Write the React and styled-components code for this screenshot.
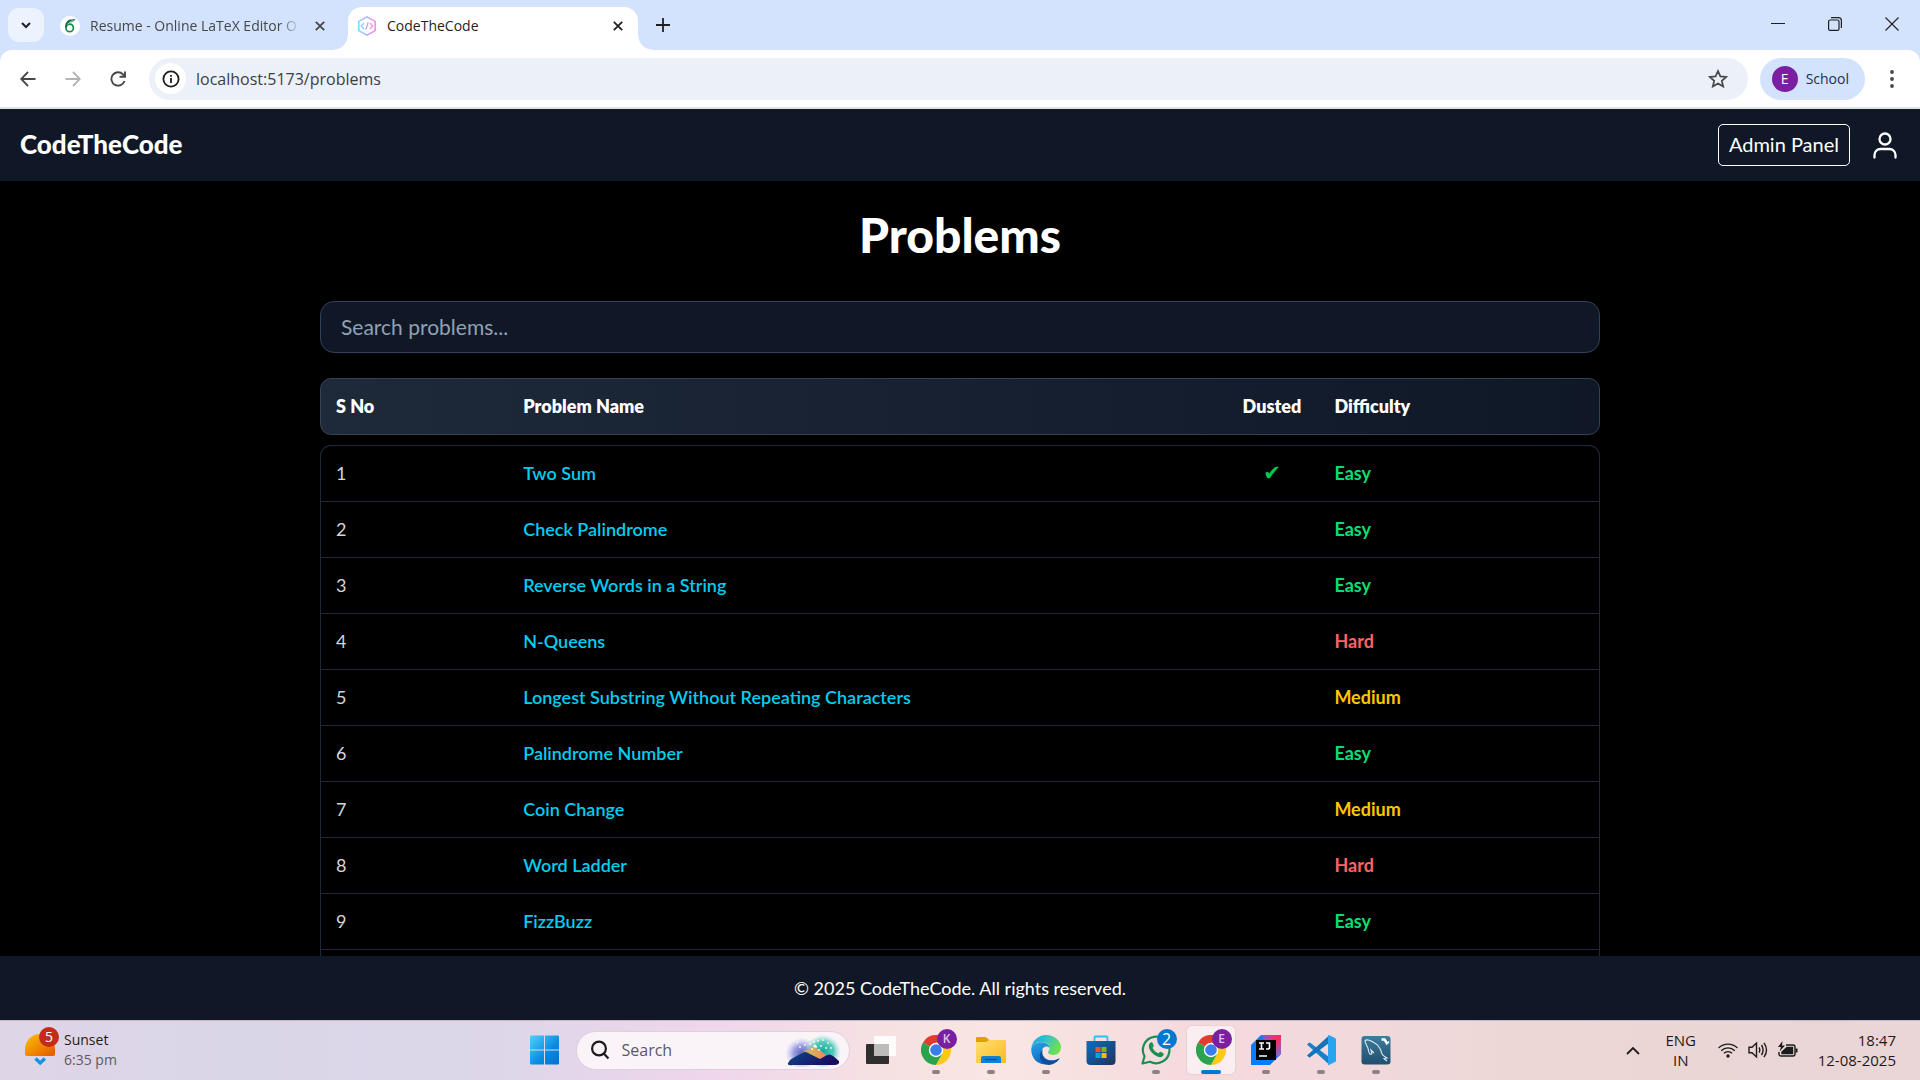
import React from "react";
import styled, { createGlobalStyle, css } from "styled-components";

const uiFont = '"Open Sans", "Noto Sans", sans-serif';
const siteFont = 'Lato, "Open Sans", sans-serif';

const GlobalStyle = createGlobalStyle`
  *, *::before, *::after { box-sizing: border-box; }
  body { margin: 0; background: #000; }
  button, input { font: inherit; color: inherit; }
  button { border: 0; padding: 0; background: none; cursor: pointer; }
  a { text-decoration: none; color: inherit; }
  svg { display: block; flex: none; }
`;

const Screen = styled.div`
  display: flex;
  flex-direction: column;
  height: 100vh;
  overflow: hidden;
  font-family: ${uiFont};
`;

/* ---------- browser window ---------- */

const TabStrip = styled.div`
  display: flex;
  align-items: flex-start;
  height: 50px;
  padding-left: 8px;
  background: #d3e2fd;
  color: #1f1f1f;
`;

const TabSearch = styled.button`
  display: grid;
  place-items: center;
  width: 36px;
  height: 34px;
  margin: 8px 8px 0 0;
  border-radius: 11px;
  background: #ecf2fe;
`;

const Tab = styled.div`
  position: relative;
  display: flex;
  align-items: center;
  gap: 10px;
  width: ${(p) => (p.$active ? 290 : 296)}px;
  height: 43px;
  margin-top: 7px;
  padding: 0 ${(p) => (p.$active ? 10 : 18)}px 6px ${(p) => (p.$active ? 9 : 8)}px;
  font-size: 14px;
  color: #474747;
  ${(p) =>
    p.$active &&
    css`
      background: #fff;
      color: #1f1f1f;
      border-radius: 14px 14px 0 0;
      &::before,
      &::after {
        content: "";
        position: absolute;
        bottom: 0;
        width: 14px;
        height: 14px;
      }
      &::before {
        left: -14px;
        background: radial-gradient(circle at 0 0, transparent 13px, #fff 14px);
      }
      &::after {
        right: -14px;
        background: radial-gradient(circle at 100% 0, transparent 13px, #fff 14px);
      }
    `}
`;

const TabTitle = styled.span`
  flex: 1;
  overflow: hidden;
  white-space: nowrap;
  line-height: 20px;
  ${(p) => p.$fade && css`mask-image: linear-gradient(90deg, #000 90%, transparent);`}
`;

const IconButton = styled.button`
  display: grid;
  place-items: center;
  width: ${(p) => p.$w || 20}px;
  height: ${(p) => p.$h || 20}px;
  color: ${(p) => p.$color || "inherit"};
`;

const NewTab = styled(IconButton)`
  margin: 8px 0 0 8px;
`;

const WindowControls = styled.div`
  display: flex;
  margin-left: auto;
`;

const ToolbarBack = styled.div`
  background: #d3e2fd;
`;

const Toolbar = styled.div`
  display: flex;
  align-items: center;
  gap: 9px;
  height: 59px;
  padding: 0 10px;
  background: #fff;
  border-bottom: 2px solid #dfe4e2;
  border-radius: 12px 12px 0 0;
  color: #474747;
`;

const Omnibox = styled.label`
  display: flex;
  flex: 1;
  align-items: center;
  height: 42px;
  margin: 0 3px 0 4px;
  padding: 0 20px 0 6px;
  border-radius: 21px;
  background: #ebf0f9;
`;

const SiteInfo = styled.span`
  display: grid;
  place-items: center;
  width: 31px;
  height: 31px;
  margin-right: 10px;
  border-radius: 50%;
  background: #fff;
`;

const UrlInput = styled.input`
  flex: 1;
  min-width: 0;
  padding: 0;
  border: 0;
  outline: 0;
  background: none;
  font-size: 16px;
  line-height: 24px;
  color: #3c3e42;
`;

const Profile = styled.button`
  display: flex;
  align-items: center;
  gap: 8px;
  height: 42px;
  padding: 0 16px 0 12px;
  border-radius: 21px;
  background: #d3e2fd;
  font-size: 14px;
  color: #1b2f52;
`;

const Avatar = styled.span`
  display: grid;
  place-items: center;
  width: 26px;
  height: 26px;
  border-radius: 50%;
  background: #7b1fa2;
  color: #fff;
  font-size: 14px;
`;

/* ---------- site ---------- */

const SiteHeader = styled.header`
  display: flex;
  align-items: center;
  gap: 20px;
  height: 72px;
  flex: none;
  padding: 0 20px;
  background: #101828;
  color: #fff;
  font-family: ${siteFont};
`;

const Brand = styled.a`
  margin-right: auto;
  padding-bottom: 2px;
  font-size: 26px;
  font-weight: 900;
`;

const AdminLink = styled.a`
  padding: 7px 10px 9px;
  border: 1px solid #fff;
  border-radius: 5px;
  font-size: 20px;
  line-height: 24px;
`;

const Main = styled.main`
  flex: 1;
  display: flex;
  flex-direction: column;
  min-height: 0;
  overflow: hidden;
  width: 100%;
  max-width: 1280px;
  margin: 0 auto;
  background: #000;
  font-family: ${siteFont};
`;

const Title = styled.h1`
  margin: 26px 0 38px;
  text-align: center;
  font-size: 48px;
  line-height: 56px;
  font-weight: 900;
  color: #fff;
`;

const ProblemSearch = styled.input`
  height: 52px;
  flex: none;
  padding: 0 20px 2px;
  border: 1px solid #314158;
  border-radius: 14px;
  background: #101828;
  outline: 0;
  font-size: 21px;
  color: #fff;
  &::placeholder { color: #90a1b0; opacity: 1; }
`;

const ProblemTable = styled.table`
  display: flex;
  flex-direction: column;
  flex: 1;
  min-height: 0;
  margin-top: 25px;
  font-size: 18px;
  line-height: 24px;
  color: #d1d5dc;
`;

const TableHead = styled.thead`
  display: block;
  margin-bottom: 10px;
  border: 1px solid #364153;
  border-radius: 11px;
  background: linear-gradient(90deg, #1e2939, #101828);
  color: #fff;
`;

const TableBody = styled.tbody`
  display: block;
  flex: 1;
  border: solid #1e2939;
  border-width: 1px 1px 0;
  border-radius: 11px 11px 0 0;
`;

const Row = styled.tr`
  display: grid;
  grid-template-columns: 15fr 55fr 10fr 20fr;
  align-items: center;
  height: ${(p) => (p.$head ? 55 : 56)}px;
  padding: 0 15px 1px;
  ${(p) => !p.$head && css`border-bottom: 1px solid #1e2939;`}
`;

const HeadCell = styled.th`
  padding: 0;
  text-align: ${(p) => (p.$center ? "center" : "left")};
  font-weight: 800;
`;

const Cell = styled.td`
  padding: 0;
  text-align: ${(p) => (p.$center ? "center" : "left")};
`;

const ProblemLink = styled.a`
  font-weight: 600;
  color: #00cdf0;
`;

const levelColor = { Easy: "#05df72", Medium: "#fdc700", Hard: "#ff6467" };

const Level = styled.span`
  font-weight: 700;
  color: ${(p) => levelColor[p.$level]};
`;

const Done = styled.span`
  display: block;
  color: #00c950;
  font-family: "DejaVu Sans", sans-serif;
  font-size: 21px;
  font-weight: 700;
`;

const SiteFooter = styled.footer`
  display: grid;
  place-items: center;
  height: 64px;
  flex: none;
  background: #101828;
  color: #fff;
  font-family: ${siteFont};
  font-size: 18px;
`;

/* ---------- taskbar ---------- */

const Taskbar = styled.footer`
  display: grid;
  grid-template-columns: 1fr auto 1fr;
  align-items: center;
  height: 60px;
  flex: none;
  padding-bottom: 1px;
  border-top: 1px solid #c9b6c0;
  background: linear-gradient(90deg, #dfd5e7 0%, #d9d6e8 12%, #ddd6e9 26%, #efd6ec 37%, #f6e1e2 46%, #f9e6e2 52%, #f5dade 62%, #f2d9dc 70%, #ecd7d5 80%, #ead5d7 100%);
  color: #1c1c1c;
`;

const Weather = styled.button`
  display: flex;
  align-items: center;
  gap: 9px;
  padding-left: 25px;
  text-align: left;
  font-size: 14px;
  line-height: 20px;
`;

const Muted = styled.span`
  display: block;
  color: #5d5863;
`;

const Apps = styled.nav`
  display: flex;
  align-items: center;
  gap: 7px;
`;

const AppButton = styled.button`
  position: relative;
  display: grid;
  place-items: center;
  width: 48px;
  height: 48px;
  border-radius: 5px;
  background: ${(p) => (p.$active ? "#faeef0" : "none")};
  box-shadow: ${(p) => (p.$active ? "0 0 1px 1px #e8d2d6" : "none")};
  ${(p) =>
    (p.$running || p.$active) &&
    css`
      &::after {
        content: "";
        position: absolute;
        bottom: 0;
        left: 50%;
        width: ${p.$active ? 20 : 8}px;
        height: 4px;
        border-radius: 2px;
        background: ${p.$active ? "#0078d4" : "#8d8184"};
        transform: translateX(-50%);
      }
    `}
`;

const Badge = styled.span`
  position: absolute;
  top: 3px;
  right: 3px;
  display: grid;
  place-items: center;
  width: 20px;
  height: 20px;
  border-radius: 50%;
  background: ${(p) => p.$color};
  color: ${(p) => p.$text || "#fff"};
  font-size: ${(p) => p.$size || 12}px;
  font-weight: ${(p) => (p.$text ? 600 : 400)};
  line-height: 20px;
`;

const IconHolder = styled.span`
  position: relative;
  display: block;
`;

const WeatherBadge = styled(Badge)`
  top: -7px;
  right: -4px;
`;

const TaskSearch = styled.label`
  display: flex;
  align-items: center;
  gap: 12px;
  width: 274px;
  height: 39px;
  padding: 0 8px 0 13px;
  border: 1px solid #e0cfdd;
  border-radius: 20px;
  background: #faf4f9;
`;

const TaskSearchInput = styled.input`
  flex: 1;
  min-width: 0;
  padding: 0;
  border: 0;
  outline: 0;
  background: none;
  font-size: 16px;
  &::placeholder { color: #5c5960; opacity: 1; }
`;

const Tray = styled.div`
  display: flex;
  justify-content: flex-end;
  align-items: center;
  padding-right: 24px;
  font-size: 15px;
  line-height: 20px;
`;

const Language = styled.button`
  width: 40px;
  margin: 0 17px 0 18px;
  text-align: center;
`;

const Status = styled.div`
  display: flex;
  align-items: center;
  gap: 10px;
`;

const Clock = styled.time`
  margin-left: 20px;
  text-align: right;
  white-space: pre-line;
`;

/* ---------- drawings ---------- */

const Stroke = ({ w = 20, h, box, sw = 2, children, ...rest }) => (
  <svg width={w} height={h || w} viewBox={box || `0 0 ${w} ${h || w}`} fill="none" stroke="currentColor" strokeWidth={sw} {...rest}>
    {children}
  </svg>
);

const Cross = () => (
  <Stroke w={10} sw={1.8}><path d="M.8.8l8.4 8.4M9.2.8L.8 9.2" /></Stroke>
);

const Overleaf = () => (
  <svg width="20" height="20" viewBox="0 0 20 20">
    <circle cx="10" cy="10" r="10" fill="#fff" />
    <ellipse cx="9.7" cy="11.9" rx="3.7" ry="3.800" fill="none" stroke="#138a4b" strokeWidth="1.7" />
    <path d="M5.200 12C4.800 7.500 7.200 4 10.500 3.600c2-.3 3.500-.1 5-.6-1 2.300-3 2.800-4.500 3.300-2 .7-3.500 2-4 4.200z" fill="#0f6b3c" />
    <path d="M7.500 8.500C8.800 6.300 11 5.400 13.500 4.400" fill="none" stroke="#fff" strokeWidth=".7" />
  </svg>
);

const CodeLogo = () => (
  <svg width="20" height="20" viewBox="0 0 20 20" fill="none" strokeWidth="1.600">
    <defs>
      <linearGradient id="hex" x1="0" x2="1">
        <stop offset="0" stopColor="#7fdcff" />
        <stop offset=".5" stopColor="#b9a8ff" />
        <stop offset="1" stopColor="#ff8ce8" />
      </linearGradient>
    </defs>
    <path d="M10 .9l8.200 4.500v9.200L10 19.100 1.800 14.600V5.400z" stroke="url(#hex)" />
    <path d="M7 7l-2.800 3L7 13M13 7l2.800 3-2.800 3M11.200 6.200L8.800 13.800" stroke="url(#hex)" strokeWidth="1.300" />
  </svg>
);

const Chrome = () => (
  <svg width="30" height="30" viewBox="0 0 48 48">
    <path d="M24 24L3.200 12A24 24 0 0 1 44.800 12z" fill="#e33b2e" />
    <path d="M24 24L3.200 12A24 24 0 0 0 24 48L34.400 30z" fill="#2ba24c" />
    <path d="M24 12h20.800A24 24 0 0 1 24 48l10.400-18z" fill="#fdc816" />
    <circle cx="24" cy="24" r="11.500" fill="#fff" />
    <circle cx="24" cy="24" r="9.300" fill="#3b7ded" />
  </svg>
);

const Windows = () => (
  <svg width="30" height="30" viewBox="0 0 30 30">
    <defs>
      <linearGradient id="win" x1="0" y1="0" x2="1" y2="1" >
        <stop offset="0" stopColor="#4fd0ff" />
        <stop offset=".6" stopColor="#0a8ade" />
        <stop offset="1" stopColor="#0070d0" />
      </linearGradient>
    </defs>
    <path d="M0 1.500Q0 .5 1 .5h13v14H0zM15 .5h13q1 0 1 1v13H15zM0 15.500h14v14H1q-1 0-1-1zM15 15.500h14v13q0 1-1 1H15z" fill="url(#win)" />
  </svg>
);

const sparks = [[12, 9], [17, 5], [23, 7], [28, 4], [33, 8], [38, 7], [43, 10], [15, 14], [20, 12], [25, 11], [29, 9], [31, 14], [36, 13], [41, 15], [46, 15], [27, 16], [34, 17]];

const Fireworks = () => (
  <svg width="56" height="34" viewBox="0 0 56 34">
    <defs>
      <radialGradient id="glowA" cx=".5" cy=".55"><stop offset="0" stopColor="#5660b8" /><stop offset=".5" stopColor="#8a90dc" stopOpacity=".85" /><stop offset="1" stopColor="#b9bdf2" stopOpacity="0" /></radialGradient>
      <radialGradient id="glowB" cx=".5" cy=".55"><stop offset="0" stopColor="#12a79b" /><stop offset=".6" stopColor="#3dc3b4" stopOpacity=".85" /><stop offset="1" stopColor="#8fe0d8" stopOpacity="0" /></radialGradient>
      <linearGradient id="hill" x1="0" y1="0" x2="1" y2=".4"><stop offset="0" stopColor="#0a4a8a" /><stop offset="1" stopColor="#1b0a62" /></linearGradient>
      <linearGradient id="dusk" x1="0" x2="1"><stop offset="0" stopColor="#a99a78" /><stop offset=".5" stopColor="#d8b060" /><stop offset="1" stopColor="#f2805c" /></linearGradient>
    </defs>
    <ellipse cx="17" cy="19" rx="17" ry="16" fill="url(#glowA)" />
    <ellipse cx="38" cy="17" rx="18" ry="17" fill="url(#glowB)" />
    <path d="M12 23l9-6 8-3 7 4 6 5-7 5z" fill="url(#dusk)" />
    {sparks.map(([x, y]) => <circle key={`${x}-${y}`} cx={x} cy={y} r=".9" fill="#fff6d8" />)}
    <circle cx="30" cy="13" r="1.600" fill="#fffbe0" />
    <path d="M3 30q1-3 5-5l9-5q3-2 6 0l12 6 7-4q3-1.500 6 1l6 5q1 4-5 4H8q-6 1-5-2z" fill="url(#hill)" />
  </svg>
);

const TaskView = () => (
  <svg width="30" height="30" viewBox="0 0 30 30">
    <rect x="0" y="9" width="23" height="20" rx="1" fill="#2f2f2d" />
    <rect x="8" y="1" width="22" height="20" rx="1" fill="#fff" opacity=".85" />
    <rect x="8" y="9" width="15" height="12" fill="#bcbcba" />
  </svg>
);

const Folder = () => (
  <svg width="30" height="30" viewBox="0 0 30 30">
    <defs><linearGradient id="fold" x1="0" y1="0" x2="1" y2="1"><stop offset="0" stopColor="#ffe073" /><stop offset="1" stopColor="#fbb91c" /></linearGradient></defs>
    <path d="M0 3q0-1 1-1h8q1 0 2 1l2 2v4H0z" fill="#e0a008" />
    <path d="M0 7h10l3-2h16q1 0 1 1v21q0 1-1 1H1q-1 0-1-1z" fill="url(#fold)" />
    <path d="M5 28v-5q0-2 2-2h16q2 0 2 2v5z" fill="#1380d2" />
    <path d="M9 24.500h12" stroke="#0a5596" strokeWidth="1.400" />
  </svg>
);

const Edge = () => (
  <svg width="30" height="30" viewBox="0 0 30 30">
    <defs>
      <linearGradient id="edgeTop" x1="0" y1="0" x2="1" y2=".4"><stop offset="0" stopColor="#1b9de0" /><stop offset=".5" stopColor="#33c3c9" /><stop offset="1" stopColor="#6fe04e" /></linearGradient>
      <linearGradient id="edgeLow" x1="0" y1="0" x2=".4" y2="1"><stop offset="0" stopColor="#2aa5e8" /><stop offset="1" stopColor="#0968c3" /></linearGradient>
    </defs>
    <path d="M.3 13C1.500 5.500 7.500 0 15 0c8.500 0 15 5.800 15 12.500 0 4.500-3.300 7.500-7.500 7.500-3.500 0-5.500-1.400-5.500-2.700 0-1 1.500-1.400 1.500-4.300C18.500 9.500 15 7 10.500 7 5 7 1.500 10 .3 13z" fill="url(#edgeTop)" />
    <path d="M.2 14C1 9.500 5.500 7.200 10.200 7.200c4.800 0 8.300 2.600 8.300 5.800-2.500-3-8-1.500-8 5 0 6 5.500 10 10 10.400C12 32 0 27 .2 14z" fill="url(#edgeLow)" />
    <path d="M12 14.500c-2.500 5 2 11 9 10.800 3 0 5-1 7-1.800.5-.2.800.2.500.6C23 31.500 13 32 9.500 24.500 8 20.500 9 16.500 12 14.500z" fill="#0c4f9e" />
  </svg>
);

const Store = () => (
  <svg width="30" height="30" viewBox="0 0 30 30">
    <defs><linearGradient id="store" x1="0" y1="0" x2="1" y2="1"><stop offset="0" stopColor="#0a6fc0" /><stop offset="1" stopColor="#22325c" /></linearGradient></defs>
    <path d="M8.500 6V2.500q0-1 1-1h11q1 0 1 1V6" fill="none" stroke="#2cc0f2" strokeWidth="1.800" />
    <path d="M.5 6h29v20q0 4-4 4h-21q-4 0-4-4z" fill="url(#store)" />
    <path d="M9.500 12h5v5h-5z" fill="#f04e23" /><path d="M15.500 12h5v5h-5z" fill="#7fba00" />
    <path d="M9.500 18h5v5h-5z" fill="#00a4ef" /><path d="M15.500 18h5v5h-5z" fill="#ffb900" />
  </svg>
);

const WhatsApp = () => (
  <svg width="30" height="30" viewBox="0 0 30 30">
    <path d="M1.500 28.500l2-7.200A13.300 13.300 0 1 1 9 26.700z" fill="none" stroke="#1c8f55" strokeWidth="2.200" strokeLinejoin="round" />
    <path d="M9.500 7.500c.8-.6 1.700-.4 2 .3l1.200 2.800c.3.700-1 1.800-1 2.300 1.200 2.600 3 4.200 5.500 5.300.7.200 1.600-1.600 2.300-1.400l2.800 1.400c1 .6.200 2.600-1 3.400-2 1.200-5 .4-8-1.900-3.500-2.700-5.500-6-5.500-8.500 0-1.600.8-3 1.700-3.700z" fill="#1c8f55" />
  </svg>
);

const IntelliJ = () => (
  <svg width="30" height="30" viewBox="0 0 30 30">
    <defs>
      <linearGradient id="ij" x1=".2" y1="0" x2="1" y2=".7"><stop offset="0" stopColor="#7a5be0" /><stop offset=".3" stopColor="#e0358a" /><stop offset=".55" stopColor="#fe2857" /><stop offset="1" stopColor="#8b62c8" /></linearGradient>
    </defs>
    <path d="M10 0h20v19L19 30H0V10z" fill="#087cfa" />
    <path d="M10 0h20v19l-3 3-9-9z" fill="url(#ij)" />
    <path d="M5 5h20v20H5z" fill="#000" />
    <path d="M8 8h5M10.500 8v6M8 14h5M15 8h3.500v4.500q0 1.500-2 1.500H15M8 21h8" fill="none" stroke="#fff" strokeWidth="1.600" />
  </svg>
);

const VsCode = () => (
  <svg width="30" height="30" viewBox="0 0 30 30">
    <path d="M1 9.500l2-1.700q.8-.4 1.500.1L23 22v7.500z" fill="#1a7fc9" />
    <path d="M1 20.500l2 1.700q.8.400 1.500-.1L23 8V.5z" fill="#1273b8" />
    <path d="M22 .2q.6-.4 1.400 0l5.600 2.700q1 .5 1 1.600v21q0 1.100-1 1.600l-5.600 2.700q-.8.400-1.400 0z" fill="#2aa3f0" />
  </svg>
);

const MySql = () => (
  <svg width="30" height="30" viewBox="0 0 30 30">
    <defs><linearGradient id="sql" x1="0" y1="0" x2="0" y2="1"><stop offset="0" stopColor="#3f7d9f" /><stop offset="1" stopColor="#1f4f6c" /></linearGradient></defs>
    <rect x=".5" y="1" width="29" height="28.500" rx="3" fill="url(#sql)" />
    <path d="M11 19c-2 1-3-1-3.500-3.500C7 11 4 9 4 6c1-2 5-1 8 1 5 2.500 8 7 9 12 1 2 3 3 5 4l-3 .5 3 2.500M11 19l-1-4 3 3" fill="none" stroke="#dcebf2" strokeWidth="1.100" />
    <path d="M20.500 4.500h3l3 4.500" fill="none" stroke="#fff" strokeWidth="2.400" />
    <path d="M25 9.500l3-3" fill="none" stroke="#fff" strokeWidth="1.500" />
  </svg>
);

const SunsetIcon = () => (
  <svg width="30" height="32" viewBox="0 0 30 32">
    <defs><linearGradient id="sun" x1="0" y1="0" x2="1" y2="1"><stop offset="0" stopColor="#fcc400" /><stop offset="1" stopColor="#e65400" /></linearGradient></defs>
    <path d="M2 22q-2 0-2-2v-5a15 15 0 0 1 30 0v5q0 2-2 2z" fill="url(#sun)" />
    <path d="M10.500 24.500l4.700 4.500 4.700-4.500" fill="none" stroke="#1593e0" strokeWidth="3.400" />
  </svg>
);

const Wifi = () => (
  <Stroke w={20} h={16} sw={1.3}>
    <path d="M.6 6a13.300 13.300 0 0 1 18.800 0M3.200 8.700a9.600 9.600 0 0 1 13.600 0M5.900 11.300a5.800 5.800 0 0 1 8.200 0" />
    <circle cx="10" cy="14" r="1.700" fill="currentColor" stroke="none" />
  </Stroke>
);

const Volume = () => (
  <Stroke w={20} h={18} sw={1.4}>
    <path d="M1 6.200h3L8.500 2v14L4 11.800H1zM11 6.500q1.600 2.500 0 5M13.500 4q3.200 5 0 10M16 1.800q5 7.200 0 14.400" />
  </Stroke>
);

const Battery = () => (
  <Stroke w={20} h={18} sw={1.4}>
    <path d="M8 4h7q2 0 2 2v7q0 2-2 2H3q-2 0-2-2v-2" />
    <path d="M9 6.500h5.500v6H4V11z" fill="currentColor" />
    <path d="M17.500 7.500h2v4h-2z" fill="currentColor" stroke="none" />
    <path d="M4.500 0L0 6h3L1.500 10.500 7 4.500H4z" fill="currentColor" stroke="none" />
  </Stroke>
);

const problems = [
  ["Two Sum", "Easy", true],
  ["Check Palindrome", "Easy"],
  ["Reverse Words in a String", "Easy"],
  ["N-Queens", "Hard"],
  ["Longest Substring Without Repeating Characters", "Medium"],
  ["Palindrome Number", "Easy"],
  ["Coin Change", "Medium"],
  ["Word Ladder", "Hard"],
  ["FizzBuzz", "Easy"],
];

const Browser = () => (
  <>
    <TabStrip>
      <TabSearch aria-label="Search tabs">
        <Stroke w={10} h={7} sw={2}><path d="M1 1l4 4 4-4" /></Stroke>
      </TabSearch>
      <Tab>
        <Overleaf />
        <TabTitle $fade>Resume - Online LaTeX Editor O</TabTitle>
        <IconButton aria-label="Close tab"><Cross /></IconButton>
      </Tab>
      <Tab $active>
        <CodeLogo />
        <TabTitle>CodeTheCode</TabTitle>
        <IconButton aria-label="Close tab"><Cross /></IconButton>
      </Tab>
      <NewTab $w={34} $h={34} aria-label="New tab">
        <Stroke w={14} sw={1.8}><path d="M7 0v14M0 7h14" /></Stroke>
      </NewTab>
      <WindowControls>
        <IconButton $w={57} $h={48} aria-label="Minimize"><Stroke w={14} sw={1}><path d="M0 6.500h14" /></Stroke></IconButton>
        <IconButton $w={57} $h={48} aria-label="Restore">
          <Stroke w={14} sw={1.2}><rect x=".6" y="3" width="10.400" height="10.400" rx="1.500" /><path d="M3 .6h7.500q2.900 0 2.900 2.900V11" /></Stroke>
        </IconButton>
        <IconButton $w={57} $h={48} aria-label="Close"><Stroke w={14} sw={1.1}><path d="M.5.5l13 13M13.500.5l-13 13" /></Stroke></IconButton>
      </WindowControls>
    </TabStrip>
    <ToolbarBack>
      <Toolbar>
        <IconButton $w={36} $h={36} aria-label="Back"><Stroke w={16} sw={1.8}><path d="M15.500 8H1.500M8 1L1.200 8 8 15" /></Stroke></IconButton>
        <IconButton $w={36} $h={36} $color="#b3b3b3" aria-label="Forward"><Stroke w={16} sw={1.8}><path d="M.5 8h14M8 1l6.800 7L8 15" /></Stroke></IconButton>
        <IconButton $w={36} $h={36} aria-label="Reload"><Stroke w={16} sw={1.9}><path d="M14.500 10A6.700 6.700 0 1 1 13 3.300L15 5.500M15 .5v5.300H9.500" /></Stroke></IconButton>
        <Omnibox>
          <SiteInfo>
            <Stroke w={18} sw={1.8} color="#1f1f1f"><circle cx="9" cy="9" r="7.600" /><path d="M9 8v5M9 5v1.700" /></Stroke>
          </SiteInfo>
          <UrlInput aria-label="Address" defaultValue="localhost:5173/problems" />
          <IconButton aria-label="Bookmark">
            <Stroke w={20} sw={1.7}><path d="M10 2l2.400 5.400 5.900.5-4.500 3.900 1.400 5.800L10 14.500l-5.200 3.100 1.400-5.800L1.700 7.900l5.900-.5z" /></Stroke>
          </IconButton>
        </Omnibox>
        <Profile><Avatar>E</Avatar>School</Profile>
        <IconButton $w={36} $h={36} aria-label="Menu">
          <svg width="4" height="18" fill="currentColor"><circle cx="2" cy="2" r="1.900" /><circle cx="2" cy="9" r="1.900" /><circle cx="2" cy="16" r="1.900" /></svg>
        </IconButton>
      </Toolbar>
    </ToolbarBack>
  </>
);

const apps = [
  { name: "Chrome K", icon: <Chrome />, running: true, badge: { text: "K", color: "#7b1fa2", ink: "#dcc3e6" } },
  { name: "Explorer", icon: <Folder />, running: true },
  { name: "Edge", icon: <Edge />, running: true },
  { name: "Store", icon: <Store /> },
  { name: "WhatsApp", icon: <WhatsApp />, running: true, badge: { text: "2", color: "#0078d4", size: 16 } },
  { name: "Chrome E", icon: <Chrome />, active: true, badge: { text: "E", color: "#7b1fa2", ink: "#dcc3e6" } },
  { name: "IntelliJ", icon: <IntelliJ />, running: true },
  { name: "Code", icon: <VsCode />, running: true },
  { name: "Workbench", icon: <MySql />, running: true },
];

export default function App() {
  return (
    <Screen>
      <GlobalStyle />
      <Browser />
      <SiteHeader>
        <Brand href="#">CodeTheCode</Brand>
        <AdminLink href="#">Admin Panel</AdminLink>
        <IconButton $w={30} $h={30} aria-label="Account">
          <Stroke w={24} h={27} sw={2.3} strokeLinecap="round"><circle cx="12" cy="7" r="5.500" /><path d="M1.500 25.500v-2.500a6 6 0 0 1 6-6h9a6 6 0 0 1 6 6v2.500" /></Stroke>
        </IconButton>
      </SiteHeader>
      <Main>
        <Title>Problems</Title>
        <ProblemSearch aria-label="Search problems" placeholder="Search problems..." />
        <ProblemTable>
          <TableHead>
            <Row $head>
              <HeadCell>S No</HeadCell>
              <HeadCell>Problem Name</HeadCell>
              <HeadCell $center>Dusted</HeadCell>
              <HeadCell>Difficulty</HeadCell>
            </Row>
          </TableHead>
          <TableBody>
            {problems.map(([name, level, done], i) => (
              <Row key={name}>
                <Cell>{i + 1}</Cell>
                <Cell><ProblemLink href="#">{name}</ProblemLink></Cell>
                <Cell $center>{done && <Done>✔</Done>}</Cell>
                <Cell><Level $level={level}>{level}</Level></Cell>
              </Row>
            ))}
          </TableBody>
        </ProblemTable>
      </Main>
      <SiteFooter>© 2025 CodeTheCode. All rights reserved.</SiteFooter>
      <Taskbar>
        <Weather>
          <IconHolder><SunsetIcon /><WeatherBadge $color="#c42b1c" $size={14}>5</WeatherBadge></IconHolder>
          <span>Sunset<Muted>6:35 pm</Muted></span>
        </Weather>
        <Apps>
          <AppButton aria-label="Start"><Windows /></AppButton>
          <TaskSearch>
            <Stroke w={20} sw={2.2}><circle cx="9" cy="8.500" r="6.900" /><path d="M13.800 13.600l4.700 4.900" /></Stroke>
            <TaskSearchInput aria-label="Search" placeholder="Search" />
            <Fireworks />
          </TaskSearch>
          <AppButton aria-label="Task view"><TaskView /></AppButton>
          {apps.map((a) => (
            <AppButton key={a.name} aria-label={a.name} $running={a.running} $active={a.active}>
              {a.icon}
              {a.badge && <Badge $color={a.badge.color} $text={a.badge.ink} $size={a.badge.size}>{a.badge.text}</Badge>}
            </AppButton>
          ))}
        </Apps>
        <Tray>
          <IconButton aria-label="Hidden icons"><Stroke w={14} h={9} sw={1.8}><path d="M1 8l6-6 6 6" /></Stroke></IconButton>
          <Language>ENG IN</Language>
          <Status><Wifi /><Volume /><Battery /></Status>
          <Clock>{"18:47\n12-08-2025"}</Clock>
        </Tray>
      </Taskbar>
    </Screen>
  );
}
